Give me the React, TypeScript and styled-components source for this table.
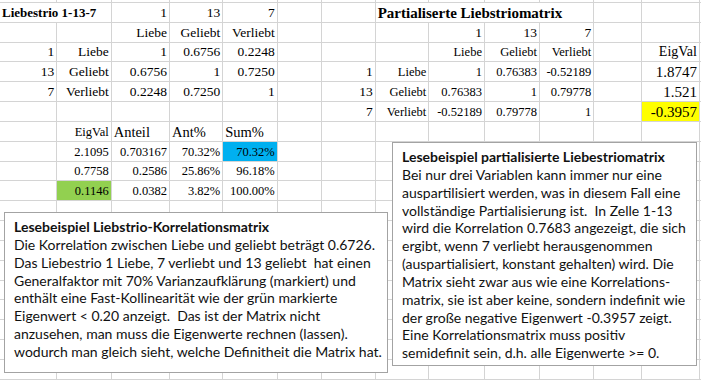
import React from "react";
import styled, { createGlobalStyle } from "styled-components";

const Global = createGlobalStyle`
  html, body { margin: 0; padding: 0; background: #ffffff; }
  body { width: 701px; height: 380px; overflow: hidden; }
`;

const COLS = [57.3, 54.4, 58.3, 53.3, 54.4, 44, 54, 53.6, 55.7, 55, 54.3, 47.4, 58.3];
const ROWS = 20;

const Page = styled.div`
  position: relative;
  width: 701px;
  height: 380px;
  overflow: hidden;
  background: #ffffff;
`;

const Sheet = styled.div`
  display: grid;
  grid-template-columns: ${COLS.map((w) => `${w}px`).join(" ")} 1fr;
  grid-template-rows: 3px repeat(${ROWS}, 19.83px);
  width: 701px;
  font-family: "Liberation Serif", "Times New Roman", serif;
  color: #000000;
`;

type CellProps = {
  $align?: "left" | "right";
  $bold?: boolean;
  $size?: number;
  $bg?: string;
  $span?: number;
};

const Cell = styled.div<CellProps>`
  box-sizing: border-box;
  grid-column: span ${(p) => p.$span ?? 1};
  border-right: 1px solid #d4d4d4;
  border-bottom: 1px solid #d4d4d4;
  background: ${(p) => p.$bg ?? "transparent"};
  display: flex;
  align-items: flex-end;
  justify-content: ${(p) => (p.$align === "left" ? "flex-start" : "flex-end")};
  padding: 0 2px 1px 2px;
  font-size: ${(p) => p.$size ?? 13.5}px;
  font-weight: ${(p) => (p.$bold ? 700 : 400)};
  line-height: 16px;
  white-space: nowrap;
  overflow: visible;
`;

const NoteBox = styled.div<{ $left: number; $top: number; $w: number; $h: number }>`
  position: absolute;
  left: ${(p) => p.$left}px;
  top: ${(p) => p.$top}px;
  width: ${(p) => p.$w}px;
  height: ${(p) => p.$h}px;
  box-sizing: border-box;
  background: #ffffff;
  border: 1px solid #a3a3a3;
  padding: 5px 0 0 9px;
  font-family: Lato, "Liberation Sans", sans-serif;
  font-size: 14px;
  line-height: 17.85px;
  color: #111111;
`;

const NoteTitle = styled.div`
  font-weight: 700;
  white-space: nowrap;
`;

const NoteLine = styled.div`
  white-space: pre;
`;

type CellDef = {
  text: string;
  align?: "left" | "right";
  bold?: boolean;
  size?: number;
  bg?: string;
  span?: number;
};

const L = 13.5; // left matrix
const R = 12.5; // right matrix
const T = 12.5; // lower table values
const H = 14.5; // lower table header
const M = 15; // EigVal column right

const cells: Record<string, CellDef> = {
  "1-0": { text: "Liebestrio 1-13-7", align: "left", bold: true, size: 13, span: 2 },
  "1-2": { text: "1", size: L },
  "1-3": { text: "13", size: L },
  "1-4": { text: "7", size: L },
  "1-7": { text: "Partialiserte Liebstriomatrix", align: "left", bold: true, size: 15, span: 4 },

  "2-2": { text: "Liebe", size: L },
  "2-3": { text: "Geliebt", size: L },
  "2-4": { text: "Verliebt", size: L },
  "2-8": { text: "1", size: 13.5 },
  "2-9": { text: "13", size: 13.5 },
  "2-10": { text: "7", size: 13.5 },

  "3-0": { text: "1", size: L },
  "3-1": { text: "Liebe", size: L },
  "3-2": { text: "1", size: L },
  "3-3": { text: "0.6756", size: L },
  "3-4": { text: "0.2248", size: L },
  "3-8": { text: "Liebe", size: R },
  "3-9": { text: "Geliebt", size: R },
  "3-10": { text: "Verliebt", size: R },
  "3-12": { text: "EigVal", size: 14 },

  "4-0": { text: "13", size: L },
  "4-1": { text: "Geliebt", size: L },
  "4-2": { text: "0.6756", size: L },
  "4-3": { text: "1", size: L },
  "4-4": { text: "0.7250", size: L },
  "4-6": { text: "1", size: 13.5 },
  "4-7": { text: "Liebe", size: R },
  "4-8": { text: "1", size: R },
  "4-9": { text: "0.76383", size: R },
  "4-10": { text: "-0.52189", size: R },
  "4-12": { text: "1.8747", size: M },

  "5-0": { text: "7", size: L },
  "5-1": { text: "Verliebt", size: L },
  "5-2": { text: "0.2248", size: L },
  "5-3": { text: "0.7250", size: L },
  "5-4": { text: "1", size: L },
  "5-6": { text: "13", size: 13.5 },
  "5-7": { text: "Geliebt", size: R },
  "5-8": { text: "0.76383", size: R },
  "5-9": { text: "1", size: R },
  "5-10": { text: "0.79778", size: R },
  "5-12": { text: "1.521", size: M },

  "6-6": { text: "7", size: 13.5 },
  "6-7": { text: "Verliebt", size: R },
  "6-8": { text: "-0.52189", size: R },
  "6-9": { text: "0.79778", size: R },
  "6-10": { text: "1", size: R },
  "6-12": { text: "-0.3957", size: M, bg: "#ffff00" },

  "7-1": { text: "EigVal", size: 12.5 },
  "7-2": { text: "Anteil", align: "left", size: H },
  "7-3": { text: "Ant%", align: "left", size: H },
  "7-4": { text: "Sum%", align: "left", size: H },

  "8-1": { text: "2.1095", size: T },
  "8-2": { text: "0.703167", size: T },
  "8-3": { text: "70.32%", size: T },
  "8-4": { text: "70.32%", size: T, bg: "#00b0f0" },

  "9-1": { text: "0.7758", size: T },
  "9-2": { text: "0.2586", size: T },
  "9-3": { text: "25.86%", size: T },
  "9-4": { text: "96.18%", size: T },

  "10-1": { text: "0.1146", size: T, bg: "#92d050" },
  "10-2": { text: "0.0382", size: T },
  "10-3": { text: "3.82%", size: T },
  "10-4": { text: "100.00%", size: T },
};

const leftNote = {
  title: "Lesebeispiel Liebstrio-Korrelationsmatrix",
  lines: [
    "Die Korrelation zwischen Liebe und geliebt beträgt 0.6726.",
    "Das Liebestrio 1 Liebe, 7 verliebt und 13 geliebt  hat einen",
    "Generalfaktor mit 70% Varianzaufklärung (markiert) und",
    "enthält eine Fast-Kollinearität wie der grün markierte",
    "Eigenwert < 0.20 anzeigt.  Das ist der Matrix nicht",
    "anzusehen, man muss die Eigenwerte rechnen (lassen).",
    "wodurch man gleich sieht, welche Definitheit die Matrix hat.",
  ],
};

const rightNote = {
  title: "Lesebeispiel partialisierte Liebestriomatrix",
  lines: [
    "Bei nur drei Variablen kann immer nur eine",
    "auspartilisiert werden, was in diesem Fall eine",
    "vollständige Partialisierung ist.  In Zelle 1-13",
    "wird die Korrelation 0.7683 angezeigt, die sich",
    "ergibt, wenn 7 verliebt herausgenommen",
    "(auspartialisiert, konstant gehalten) wird. Die",
    "Matrix sieht zwar aus wie eine Korrelations-",
    "matrix, sie ist aber keine, sondern indefinit wie",
    "der große negative Eigenwert -0.3957 zeigt.",
    "Eine Korrelationsmatrix muss positiv",
    "semidefinit sein, d.h. alle Eigenwerte >= 0.",
  ],
};

function renderRow(r: number) {
  const out: React.ReactNode[] = [];
  let c = 0;
  const total = COLS.length + 1;
  while (c < total) {
    const def = cells[`${r}-${c}`];
    if (def) {
      out.push(
        <Cell
          key={`${r}-${c}`}
          $align={def.align}
          $bold={def.bold}
          $size={def.size}
          $bg={def.bg}
          $span={def.span}
        >
          {def.text}
        </Cell>
      );
      c += def.span ?? 1;
    } else {
      out.push(<Cell key={`${r}-${c}`} />);
      c += 1;
    }
  }
  return out;
}

export default function App() {
  const rows: React.ReactNode[] = [];
  for (let r = 0; r <= ROWS; r++) rows.push(...renderRow(r));
  return (
    <>
      <Global />
      <Page>
        <Sheet>{rows}</Sheet>
        <NoteBox $left={4} $top={212} $w={384} $h={161}>
          <NoteTitle>{leftNote.title}</NoteTitle>
          {leftNote.lines.map((l, i) => (
            <NoteLine key={i}>{l}</NoteLine>
          ))}
        </NoteBox>
        <NoteBox $left={392} $top={142} $w={305} $h={224}>
          <NoteTitle>{rightNote.title}</NoteTitle>
          {rightNote.lines.map((l, i) => (
            <NoteLine key={i}>{l}</NoteLine>
          ))}
        </NoteBox>
      </Page>
    </>
  );
}
